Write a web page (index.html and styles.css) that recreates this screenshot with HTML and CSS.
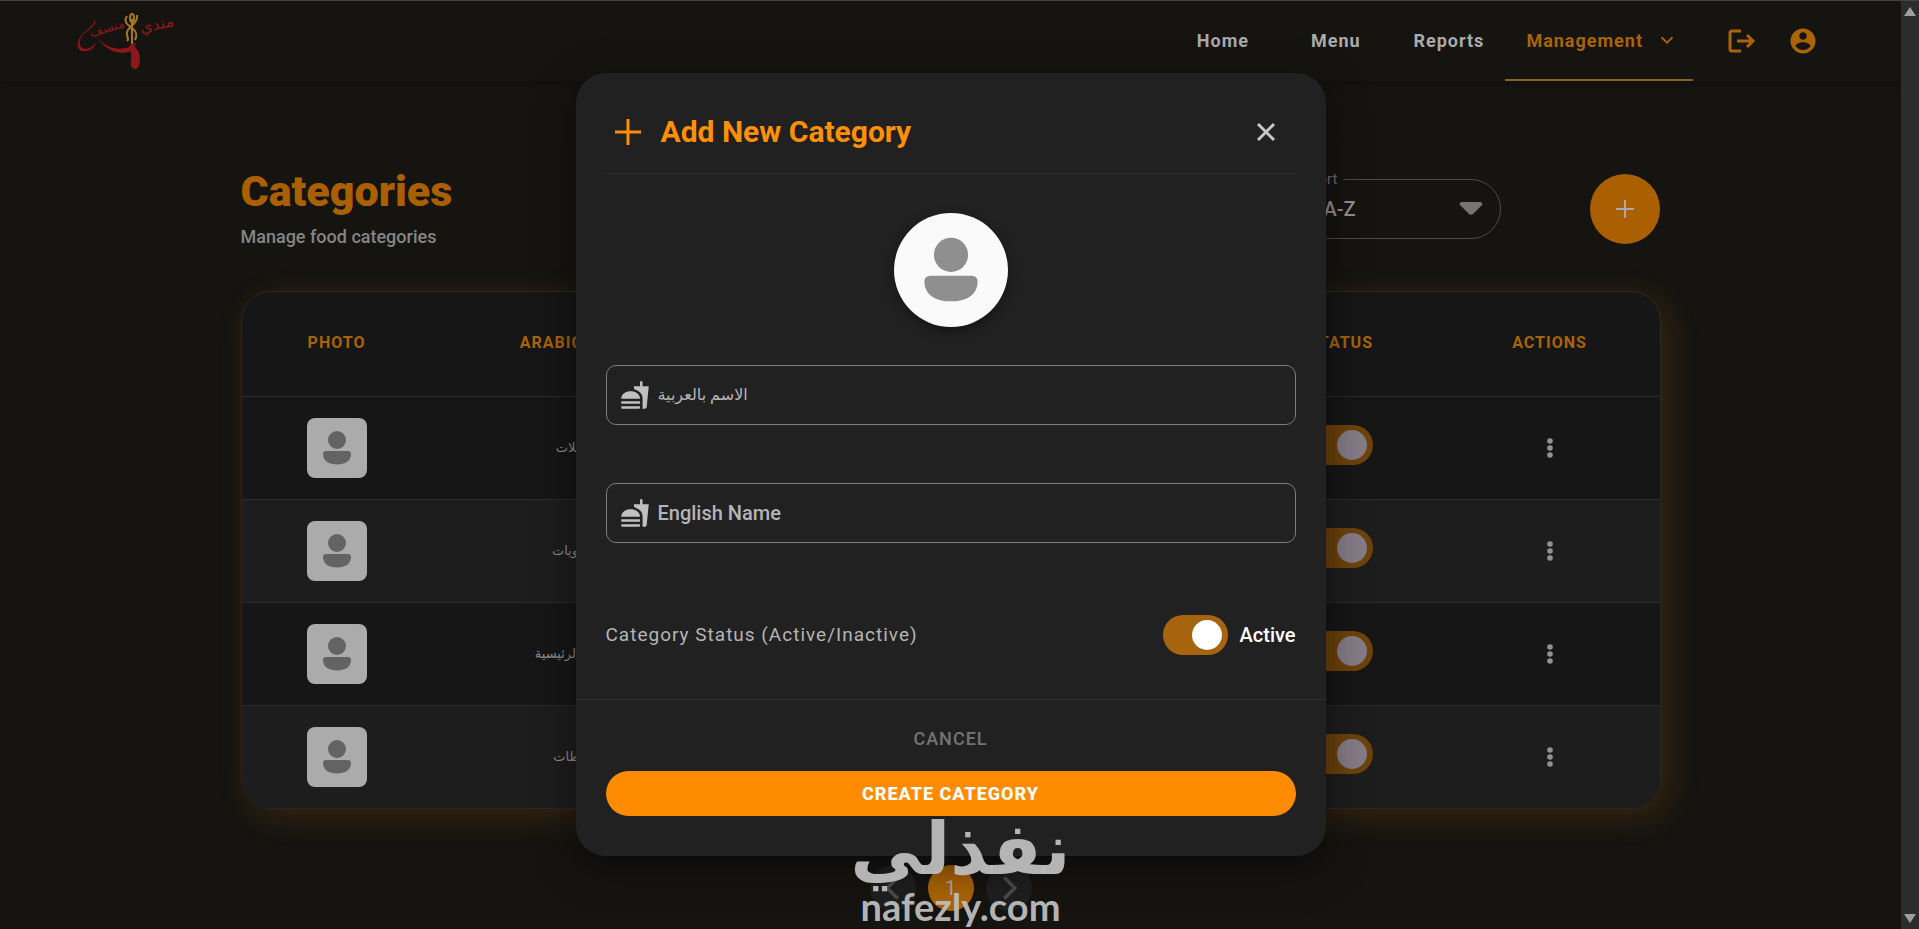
FILE: index.html
```
<!DOCTYPE html>
<html lang="en">
<head>
  <meta charset="UTF-8" />
  <meta name="viewport" content="width=device-width, initial-scale=1.0" />
  <title>Categories</title>
  <link rel="stylesheet" href="styles.css">
</head>
<body>

<!-- Shared icons -->
<svg class="sprite" aria-hidden="true">
  <symbol id="person" viewBox="0 0 60 60">
    <circle cx="30" cy="22" r="9" />
    <path d="M19 33h22a3 3 0 0 1 3 3c0 7-6 10.500-14 10.500S16 43 16 36a3 3 0 0 1 3-3z" />
  </symbol>
  <symbol id="fastfood" viewBox="0 0 24 24">
    <path d="M18.060 22.990h1.660c.84 0 1.530-.64 1.630-1.460L23 5.050h-5V1h-1.970v4.050h-4.970l.3 2.340c1.710.47 3.310 1.320 4.270 2.260 1.440 1.420 2.430 2.890 2.430 5.290v8.050zM1 21.990V21h15.030v.99c0 .55-.45 1-1.010 1H2.010c-.56 0-1.010-.45-1.010-1zm15.030-7c0-8-15.030-8-15.030 0h15.030zM1.020 17h15v2h-15z" />
  </symbol>
  <symbol id="dots" viewBox="0 0 24 24">
    <circle cx="12" cy="5" r="2.800" /><circle cx="12" cy="12" r="2.800" /><circle cx="12" cy="19" r="2.800" />
  </symbol>
</svg>

<div class="window">
  <div class="page">

    <header class="navbar">
      <a href="#" class="logo" aria-label="Mandi Mansaf">
        <svg viewBox="0 0 112 60" width="112" height="60">
          <g class="logo-red">
            <text x="15" y="26" font-size="13" transform="rotate(-16 15 26)">منسف</text>
            <text x="65" y="22" font-size="16" transform="rotate(-12 65 22)">مندي</text>
            <path d="M19 8c2 5-4 9-10 14-5 4-7 10-4 14 4 4 12 1 15-5-1 7-8 10-14 9-5-1-6-9-1-15 4-5 13-10 14-17z" />
            <path d="M22 27c8 10 20 13 32 9 2-1 4-5 6-4-1 3-3 5-3 7-11 6-27 2-35-12z" />
            <path d="M55 33c5 3 9 8 9 14 0 8-2 11-5 11s-5-4-4-9c1-6 0-9-3-12z" />
          </g>
          <g class="logo-gold">
            <path d="M56 8v25M51 5c-4 6 1 9 5 12s6 6 3 12M61 4c2 8-9 12-10 17s3 7 0 9" />
            <ellipse cx="56" cy="7" rx="2" ry="4" />
          </g>
        </svg>
      </a>
      <nav class="nav-links">
        <a href="#">Home</a>
        <a href="#">Menu</a>
        <a href="#">Reports</a>
        <a href="#" class="active">Management
          <svg viewBox="0 0 24 24" width="22" height="22"><path d="M6 9l6 6 6-6" /></svg>
        </a>
      </nav>
      <div class="nav-icons">
        <button type="button" aria-label="Log out">
          <svg viewBox="0 0 30 30" width="30" height="30"><path class="line" d="M15 5H6a2 2 0 0 0-2 2v16a2 2 0 0 0 2 2h9M11 15h15M21 9l6 6-6 6" /></svg>
        </button>
        <button type="button" aria-label="Account">
          <svg viewBox="0 0 24 24" width="30" height="30"><path d="M12 2C6.480 2 2 6.480 2 12s4.480 10 10 10 10-4.480 10-10S17.520 2 12 2zm0 3c1.660 0 3 1.340 3 3s-1.340 3-3 3-3-1.340-3-3 1.340-3 3-3zm0 14.200c-2.500 0-4.710-1.280-6-3.220.03-1.990 4-3.080 6-3.080 1.990 0 5.970 1.090 6 3.080-1.290 1.940-3.500 3.220-6 3.220z" /></svg>
        </button>
      </div>
    </header>

    <main class="container">
      <div class="page-head">
        <div class="heading">
          <h1>Categories</h1>
          <p>Manage food categories</p>
        </div>
        <div class="tools">
          <fieldset class="sort">
            <legend><label for="sort">Sort</label></legend>
            <select id="sort"><option>A-Z</option><option>Z-A</option></select>
            <svg viewBox="0 0 24 14" width="24" height="14"><path d="M3 0h18c2 0 3 2 2 3l-9 9c-1 1-3 1-4 0L1 3C0 2 1 0 3 0z" /></svg>
          </fieldset>
          <button type="button" class="fab" aria-label="Add category">
            <svg viewBox="0 0 20 20" width="20" height="20"><path d="M10 1v18M1 10h18" /></svg>
          </button>
        </div>
      </div>

      <div class="table-card">
        <table>
          <thead>
            <tr>
              <th class="col-photo">Photo</th>
              <th class="col-arabic">Arabic Name</th>
              <th>English Name</th>
              <th class="col-status">Status</th>
              <th class="col-actions">Actions</th>
            </tr>
          </thead>
          <tbody>
            <tr>
              <td><svg class="photo"><use href="#person" /></svg></td>
              <td class="arabic" lang="ar">المقبلات</td>
              <td>Appetizers</td>
              <td class="status"><input type="checkbox" class="switch" aria-label="Appetizers status" checked></td>
              <td><button type="button" class="more" aria-label="More"><svg><use href="#dots" /></svg></button></td>
            </tr>
            <tr>
              <td><svg class="photo"><use href="#person" /></svg></td>
              <td class="arabic" lang="ar">المشويات</td>
              <td>Grills</td>
              <td class="status"><input type="checkbox" class="switch" aria-label="Grills status" checked></td>
              <td><button type="button" class="more" aria-label="More"><svg><use href="#dots" /></svg></button></td>
            </tr>
            <tr>
              <td><svg class="photo"><use href="#person" /></svg></td>
              <td class="arabic" lang="ar">الأطباق الرئيسية</td>
              <td>Main Dishes</td>
              <td class="status"><input type="checkbox" class="switch" aria-label="Main dishes status" checked></td>
              <td><button type="button" class="more" aria-label="More"><svg><use href="#dots" /></svg></button></td>
            </tr>
            <tr>
              <td><svg class="photo"><use href="#person" /></svg></td>
              <td class="arabic" lang="ar">السلطات</td>
              <td>Salads</td>
              <td class="status"><input type="checkbox" class="switch" aria-label="Salads status" checked></td>
              <td><button type="button" class="more" aria-label="More"><svg><use href="#dots" /></svg></button></td>
            </tr>
          </tbody>
        </table>
      </div>

      <div class="pagination">
        <button type="button" aria-label="Previous"><svg viewBox="0 0 24 24" width="28" height="28"><path d="M16 3l-9 9 9 9" /></svg></button>
        <button type="button" class="current">1</button>
        <button type="button" aria-label="Next"><svg viewBox="0 0 24 24" width="28" height="28"><path d="M8 3l9 9-9 9" /></svg></button>
      </div>
    </main>

    <!-- Add category dialog -->
    <div class="overlay">
      <form class="modal" role="dialog" aria-labelledby="modalTitle">
        <div class="modal-head">
          <svg viewBox="0 0 30 30" width="30" height="30"><path d="M15 2v26M2 15h26" /></svg>
          <h2 id="modalTitle">Add New Category</h2>
          <button type="button" class="close" aria-label="Close">
            <svg viewBox="0 0 20 20" width="20" height="20"><path d="M2 2l16 16M18 2L2 18" /></svg>
          </button>
        </div>
        <div class="modal-body">
          <button type="button" class="avatar" aria-label="Upload photo">
            <svg><use href="#person" /></svg>
          </button>
          <label class="field field-ar">
            <svg><use href="#fastfood" /></svg>
            <input type="text" placeholder="الاسم بالعربية" aria-label="Arabic name">
          </label>
          <label class="field">
            <svg><use href="#fastfood" /></svg>
            <input type="text" placeholder="English Name" aria-label="English name">
          </label>
          <div class="status-row">
            <span class="status-label">Category Status (Active/Inactive)</span>
            <label class="status-switch">
              <input type="checkbox" class="switch" checked>
              Active
            </label>
          </div>
        </div>
        <div class="modal-foot">
          <button type="button" class="cancel">Cancel</button>
          <button type="submit" class="create">Create Category</button>
        </div>
      </form>
    </div>

    <div class="watermark">
      <span class="watermark-ar" lang="ar">نفذلي</span>
      <span class="watermark-en">nafezly.com</span>
    </div>
  </div>

  <div class="scrollbar" aria-hidden="true">
    <svg viewBox="0 0 12 10" width="12" height="10"><path d="M6 0l6 9H0z" /></svg>
    <svg viewBox="0 0 12 10" width="12" height="10"><path d="M6 10l6-9H0z" /></svg>
  </div>
</div>

</body>
</html>
```
FILE: styles.css
```
* {
  box-sizing: border-box;
}

body {
  margin: 0;
  font-family: Roboto, "DejaVu Sans", sans-serif;
  font-size: 18px;
  color: #aaa;
  background: #151411;
}

button,
input,
select {
  font-family: inherit;
}

button {
  padding: 0;
  border: none;
  background: none;
  cursor: pointer;
}

svg {
  display: block;
  fill: none;
}

.sprite {
  position: absolute;
  width: 0;
  height: 0;
}

.window {
  display: flex;
  height: 100vh;
  overflow: hidden;
  border-top: 1px solid #434343;
}

.page {
  position: relative;
  flex: 1;
  overflow: hidden;
}

.scrollbar {
  display: flex;
  flex-direction: column;
  justify-content: space-between;
  align-items: center;
  width: 18px;
  padding: 6px 0;
  background: #2c2c2c;
}

.scrollbar path {
  fill: #9f9f9f;
}

/* Navbar */
.navbar {
  display: flex;
  align-items: center;
  height: 80px;
  padding: 0 83px 0 76px;
  box-shadow: 0 2px 8px rgba(0, 0, 0, 0.3);
}

.logo {
  margin-right: auto;
}

.logo-red {
  fill: #8e171b;
  font-family: "DejaVu Sans", sans-serif;
}

.logo-gold {
  fill: none;
  stroke: #a67a1c;
  stroke-width: 2;
}

.nav-links {
  display: flex;
  align-self: stretch;
}

.nav-links a {
  display: flex;
  justify-content: center;
  align-items: center;
  gap: 13px;
  min-width: 113px;
  border-bottom: 2px solid transparent;
  color: #aaa;
  font-weight: 700;
  letter-spacing: 1px;
  text-decoration: none;
}

.nav-links .active {
  padding: 0 15px 0 21px;
  border-color: #8d6224;
  color: #aa6404;
}

.nav-links path {
  stroke: #aa6404;
  stroke-width: 2;
}

.nav-icons {
  display: flex;
  gap: 32px;
  margin-left: 33px;
}

.nav-icons path {
  fill: #aa6404;
}

.nav-icons .line {
  fill: none;
  stroke: #aa6404;
  stroke-width: 3;
}

/* Page */
.container {
  max-width: 1420px;
  margin: 0 auto;
  padding-top: 80px;
}

.page-head {
  display: flex;
  justify-content: space-between;
  height: 130px;
}

h1 {
  margin: 4px 0 8px;
  font-size: 43px;
  line-height: 52px;
  font-weight: 900;
  color: #aa5f00;
}

.heading p {
  margin: 0;
  font-weight: 500;
  line-height: 24px;
  color: #858585;
}

.tools {
  display: flex;
  gap: 89px;
  padding-right: 1px;
}

.sort {
  position: relative;
  width: 220px;
  height: 69px;
  margin: 9px 0 0;
  padding: 0;
  border: 1px solid #4b4a48;
  border-radius: 30px;
}

.sort legend {
  margin-left: 22px;
  padding: 0 6px;
  font-size: 15px;
  line-height: 18px;
  color: #6e6e6e;
}

.sort select {
  width: 100%;
  height: 42px;
  padding: 0 42px;
  border: none;
  background: none;
  appearance: none;
  font-size: 20px;
  font-weight: 500;
  color: #929292;
}

.sort svg {
  position: absolute;
  right: 17px;
  top: 14px;
}

.sort path {
  fill: #757575;
}

.fab {
  display: grid;
  place-items: center;
  width: 70px;
  height: 70px;
  margin-top: 13px;
  border-radius: 50%;
  background: #aa5f00;
}

.fab path {
  stroke: #aaa;
  stroke-width: 2;
}

/* Table */
.table-card {
  overflow: hidden;
  border: 1px solid #2a2822;
  border-radius: 30px;
  background: #161616;
  box-shadow: 8px 8px 32px rgba(255, 140, 0, 0.15);
}

table {
  width: 100%;
  border-collapse: collapse;
  table-layout: fixed;
  text-align: center;
}

th {
  height: 104px;
  padding: 0 0 2px;
  font-size: 16px;
  font-weight: 700;
  letter-spacing: 1px;
  text-transform: uppercase;
  color: #aa6404;
}

td {
  height: 103px;
  padding: 0;
  border-top: 1px solid #2c2c2c;
  font-size: 16px;
  color: #8f8f8f;
}

tbody tr:nth-child(even) {
  background: #1d1d1d;
}

.arabic {
  font-size: 13px;
}

.status {
  padding-bottom: 6px;
}

.col-photo {
  width: 190px;
}

.col-arabic {
  width: 294px;
}

.col-status {
  width: 198px;
}

.col-actions {
  width: 220px;
}

.photo {
  width: 60px;
  height: 60px;
  margin: 0 auto;
  border-radius: 8px;
  background: #ababab;
  fill: #636363;
}

.more {
  display: block;
  margin: 0 auto;
}

.more svg {
  width: 24px;
  height: 24px;
  fill: #929292;
}

.switch {
  display: block;
  width: 65px;
  height: 40px;
  margin: 0 auto;
  padding: 5px;
  border-radius: 20px;
  background: #a6640f;
  appearance: none;
}

.switch::before {
  content: "";
  display: block;
  width: 30px;
  height: 30px;
  margin-left: 24px;
  border-radius: 50%;
  background: #fff;
}

td .switch {
  background: #6d430b;
}

td .switch::before {
  background: #857c88;
}

/* Pagination */
.pagination {
  display: flex;
  justify-content: center;
  gap: 12px;
  padding-top: 56px;
}

.pagination button {
  display: grid;
  place-items: center;
  width: 46px;
  height: 46px;
  border-radius: 50%;
  background: #1f1f1f;
  font-size: 20px;
  color: #aaa;
}

.pagination .current {
  background: #aa6404;
}

.pagination path {
  stroke: #4c4c4c;
  stroke-width: 3;
}

/* Modal */
.overlay {
  position: absolute;
  inset: 0;
  display: flex;
  justify-content: center;
  align-items: center;
  padding-bottom: 2px;
}

.modal {
  width: 750px;
  border-radius: 30px;
  background: #212121;
  box-shadow: 0 12px 40px rgba(0, 0, 0, 0.5);
}

.modal-head {
  display: flex;
  align-items: center;
  gap: 18px;
  height: 101px;
  margin: 0 30px;
  padding: 18px 20px 0 7px;
  border-bottom: 1px solid #312f2b;
}

.modal-head path {
  stroke: #ff8f05;
  stroke-width: 3;
}

.modal-head .close path {
  stroke: #c8c8c8;
}

h2 {
  flex: 1;
  margin: 0;
  font-size: 30px;
  font-weight: 700;
  color: #ff8f05;
}

.modal-body {
  display: flex;
  flex-direction: column;
  padding: 39px 30px 44px;
  border-bottom: 1px solid #2f2f2f;
}

.avatar {
  align-self: center;
  width: 114px;
  height: 114px;
  margin-bottom: 38px;
  border-radius: 50%;
  background: #fafafa;
  box-shadow: 0 4px 12px rgba(0, 0, 0, 0.4);
}

.avatar svg {
  width: 114px;
  height: 114px;
  fill: #8f8f8f;
}

.field {
  display: flex;
  align-items: center;
  gap: 8px;
  height: 60px;
  margin-bottom: 58px;
  padding: 0 13px;
  border: 1px solid #7d7d7d;
  border-radius: 10px;
}

.field svg {
  width: 30px;
  height: 30px;
  fill: #c0c0c0;
}

.field input {
  flex: 1;
  border: none;
  outline: none;
  background: none;
  padding: 0;
  font-size: 20px;
  font-weight: 500;
  color: #fff;
}

.field-ar input {
  font-size: 16px;
  font-weight: 400;
}

.field input::placeholder {
  color: #b5b5b5;
  opacity: 1;
}

.status-row {
  display: flex;
  justify-content: space-between;
  align-items: center;
  margin-top: 14px;
}

.status-label {
  font-size: 19px;
  letter-spacing: 1px;
  color: #b5b5b5;
}

.status-switch {
  display: flex;
  align-items: center;
  gap: 12px;
  font-size: 20px;
  font-weight: 500;
  color: #fff;
}

.modal-foot {
  display: flex;
  flex-direction: column;
  gap: 10px;
  padding: 16px 30px 40px;
}

.modal-foot button {
  height: 45px;
  border-radius: 24px;
  font-size: 18px;
  letter-spacing: 1px;
  text-transform: uppercase;
}

.cancel {
  font-weight: 500;
  color: #747474;
}

.create {
  background: #ff8c00;
  font-weight: 800;
  color: #fff;
}

/* Watermark */
.watermark {
  position: absolute;
  left: 0;
  right: 0;
  bottom: 0;
  display: flex;
  flex-direction: column;
  align-items: center;
  padding-left: 20px;
  color: rgba(190, 190, 190, 0.95);
  font-weight: 700;
  pointer-events: none;
}

.watermark-ar {
  font-family: "DejaVu Sans", sans-serif;
  font-size: 72px;
  line-height: 68px;
}

.watermark-en {
  font-family: Lato, sans-serif;
  font-size: 38px;
  line-height: 46px;
}
```
